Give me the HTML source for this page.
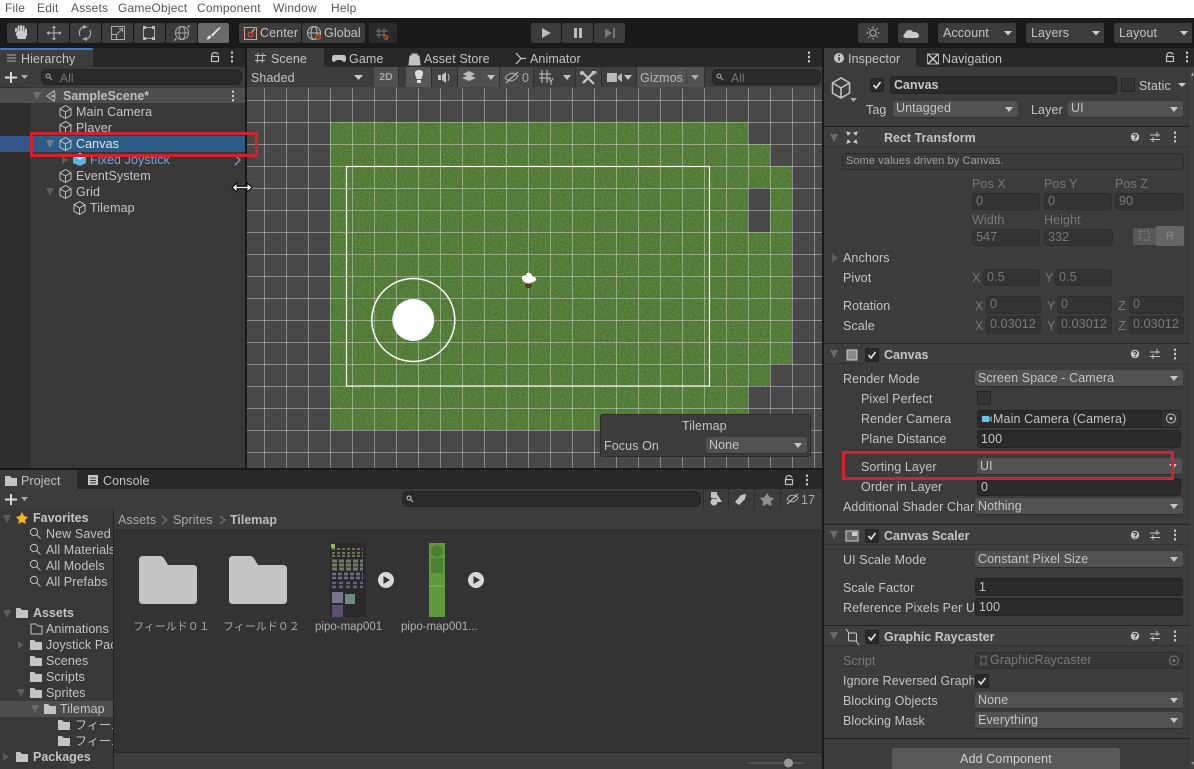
<!DOCTYPE html>
<html><head><meta charset="utf-8">
<style>
html,body{margin:0;padding:0;background:#191919;width:1194px;height:769px;overflow:hidden}
body{position:relative;font-family:"Liberation Sans","Noto Sans CJK JP",sans-serif;font-size:12.5px;letter-spacing:.1px;color:#c4c4c4}
div{position:absolute;box-sizing:border-box}
.t{height:16px;line-height:16px;white-space:nowrap}
.b{font-weight:bold;letter-spacing:0}
.g{color:#787878}
.m{color:#555;top:0;height:18px;line-height:16px;white-space:nowrap;font-size:12px;letter-spacing:.2px}
.d{background:#515151;border-radius:3px;border-bottom:1px solid #2e2e2e;line-height:17px;padding-left:3px;white-space:nowrap}
.d:after{content:"";position:absolute;right:5px;top:6px;border:4.5px solid transparent;border-top:5px solid #c4c4c4;border-bottom:0}
.f{background:#2a2a2a;border:1px solid #232323;border-radius:3px;line-height:17px;padding-left:3px;white-space:nowrap}
.fg{background:#333;border:1px solid #2d2d2d;border-radius:3px;line-height:15px;padding-left:3px;color:#787878;white-space:nowrap}
.c{background:#2a2a2a;border:1px solid #232323;border-radius:2px}
.tb{background:#3c3c3c;border-radius:2px;top:23px;height:20px}
.sb{background:#484848;top:67px;height:20px;border-right:1px solid #2e2e2e}
.l{background:#232323;height:1px}
.h{background:#3f3f3f;height:20px;left:824px;width:366px}
</style></head><body>

<div style="left:0;top:0;width:1194px;height:18px;background:#fff"></div>
<div class="m" style="left:5px">File</div>
<div class="m" style="left:37px">Edit</div>
<div class="m" style="left:71px">Assets</div>
<div class="m" style="left:118px">GameObject</div>
<div class="m" style="left:197px">Component</div>
<div class="m" style="left:273px">Window</div>
<div class="m" style="left:331px">Help</div>

<!-- toolbar -->
<div class="tb" style="left:7px;width:30px"></div>
<div class="tb" style="left:38px;width:31px"></div>
<div class="tb" style="left:70px;width:31px"></div>
<div class="tb" style="left:102px;width:31px"></div>
<div class="tb" style="left:134px;width:31px"></div>
<div class="tb" style="left:166px;width:31px"></div>
<div class="tb" style="left:198px;width:31px;background:#6a6a6a"></div>
<div class="tb" style="left:239px;width:62px"></div>
<div class="tb" style="left:302px;width:63px"></div>
<div class="tb" style="left:369px;width:28px;background:#2a2a2a"></div>
<div class="t" style="left:260px;top:25px">Center</div>
<div class="t" style="left:324px;top:25px">Global</div>
<div class="tb" style="left:531px;width:30px"></div>
<div class="tb" style="left:562px;width:31px"></div>
<div class="tb" style="left:594px;width:31px"></div>
<div class="tb" style="left:858px;width:30px"></div>
<div class="tb" style="left:898px;width:30px"></div>
<div class="tb" style="left:938px;width:78px"></div>
<div class="tb" style="left:1026px;width:78px"></div>
<div class="tb" style="left:1114px;width:78px"></div>
<div class="t" style="left:943px;top:25px">Account</div>
<div class="t" style="left:1031px;top:25px">Layers</div>
<div class="t" style="left:1119px;top:25px">Layout</div>

<!-- tab bars -->
<div style="left:0;top:48px;width:245px;height:19px;background:#282828"></div>
<div style="left:0;top:48px;width:93px;height:19px;background:#3c3c3c;border-top:2px solid #3a79bb"></div>
<div style="left:247px;top:48px;width:575px;height:19px;background:#282828"></div>
<div style="left:247px;top:48px;width:77px;height:19px;background:#3c3c3c"></div>
<div style="left:824px;top:48px;width:370px;height:19px;background:#282828"></div>
<div style="left:824px;top:48px;width:92px;height:19px;background:#3c3c3c"></div>
<div class="t" style="left:21px;top:51px">Hierarchy</div>
<div class="t" style="left:271px;top:51px">Scene</div>
<div class="t" style="left:349px;top:51px">Game</div>
<div class="t" style="left:424px;top:51px">Asset Store</div>
<div class="t" style="left:530px;top:51px">Animator</div>
<div class="t" style="left:848px;top:51px">Inspector</div>
<div class="t" style="left:942px;top:51px">Navigation</div>

<!-- Hierarchy -->
<div style="left:0;top:67px;width:245px;height:20px;background:#3c3c3c"></div>
<div style="left:41px;top:69px;width:201px;height:16px;background:#2a2a2a;border-radius:6px;border:1px solid #232323"></div>
<div class="t g" style="left:60px;top:70px;font-size:12px">All</div>
<div style="left:0;top:87px;width:245px;height:381px;background:#383838"></div>
<div style="left:0;top:87px;width:30px;height:381px;background:#2e2e2e"></div>
<div style="left:0;top:88px;width:245px;height:15px;background:#4e4e4e"></div>
<div class="t b" style="left:63px;top:88px;color:#bdbdbd">SampleScene*</div>
<div class="t" style="left:76px;top:104px">Main Camera</div>
<div class="t" style="left:76px;top:120px">Player</div>
<div style="left:0;top:136px;width:245px;height:16px;background:#2c5d87"></div>
<div style="left:0;top:136px;width:30px;height:16px;background:#34558a"></div>
<div class="t" style="left:76px;top:136px;color:#e4e4e4">Canvas</div>
<div class="t" style="left:90px;top:152px;color:#7c9fd8">Fixed Joystick</div>
<div class="t" style="left:76px;top:168px">EventSystem</div>
<div class="t" style="left:76px;top:184px">Grid</div>
<div class="t" style="left:90px;top:200px">Tilemap</div>

<!-- Scene toolbar -->
<div style="left:247px;top:67px;width:575px;height:20px;background:#3c3c3c"></div>
<div class="t" style="left:251px;top:70px">Shaded</div>
<div class="sb" style="left:374px;width:25px;background:#505050;color:#a8a8a8;font-size:10.5px;font-weight:bold;line-height:20px;text-align:center">2D</div>
<div class="sb" style="left:406px;width:26px;background:#585858"></div>
<div class="sb" style="left:432px;width:26px;background:#444"></div>
<div class="sb" style="left:458px;width:42px;background:#505050"></div>
<div class="sb" style="left:500px;width:34px;background:#484848"></div>
<div class="sb" style="left:534px;width:42px;background:#3f3f3f"></div>
<div class="sb" style="left:576px;width:26px;background:#444"></div>
<div class="sb" style="left:602px;width:35px;background:#3f3f3f"></div>
<div class="sb" style="left:637px;width:68px;background:#525252"></div>
<div class="t" style="left:522px;top:70px;color:#aaa">0</div>
<div class="t" style="left:640px;top:70px;color:#b8b8b8">Gizmos</div>
<div style="left:712px;top:69px;width:109px;height:16px;background:#2a2a2a;border-radius:6px;border:1px solid #232323"></div>
<div class="t g" style="left:731px;top:70px;font-size:12px">All</div>

<!-- Scene view -->
<svg style="position:absolute;left:247px;top:87px" width="575" height="381" viewBox="247 87 575 381">
<defs>
<filter id="n" x="0" y="0" width="100%" height="100%" color-interpolation-filters="sRGB"><feTurbulence type="fractalNoise" baseFrequency=".45 .8" numOctaves="2" seed="4"/><feColorMatrix values="0 0 0 0 .26  0 0 0 0 .4  0 0 0 0 .17  1.600 0 0 0 -.5"/></filter>
<pattern id="gv" x="264" y="0" width="22" height="22" patternUnits="userSpaceOnUse"><rect x="0" width="1" height="22" fill="#fff" fill-opacity=".36"/></pattern>
<pattern id="gh" x="0" y="100" width="22" height="22" patternUnits="userSpaceOnUse"><rect y="0" width="22" height="1" fill="#fff" fill-opacity=".36"/></pattern>
<clipPath id="gc"><path d="M330 122H748V144H770V166H792V364H770V386H748V430H330Z"/></clipPath>
</defs>
<rect x="247" y="87" width="575" height="381" fill="#484848"/>
<g clip-path="url(#gc)"><rect x="330" y="122" width="462" height="308" fill="#5c873f"/><rect x="330" y="122" width="462" height="308" filter="url(#n)"/></g>
<rect x="748" y="188" width="22" height="44" fill="#484848"/>
<rect x="247" y="88" width="575" height="380" fill="url(#gv)"/>
<rect x="247" y="88" width="575" height="380" fill="url(#gh)"/>
<rect x="346.500" y="166.500" width="363" height="219.500" fill="none" stroke="#f4fbe8" stroke-width="1.200"/>
<circle cx="413.300" cy="320" r="41.500" fill="none" stroke="#fff" stroke-width="1.500"/>
<circle cx="413.300" cy="320" r="21" fill="#fff"/>
<path d="M522 277c1-2 3-2 4-1 0-3 2-4 4-3 2 1 2 3 3 4 2 0 4 1 3 3-1 2-4 2-5 3h-5c-2-1-4-2-4-6z" fill="#fff"/>
<path d="M525 284h7l-1 4h-5z" fill="#5a3c22"/>
</svg>

<!-- Tilemap overlay -->
<div style="left:600px;top:414px;width:211px;height:43px;background:#3c3c3c;border:1px solid #2c2c2c;border-radius:3px"></div>
<div class="t" style="left:682px;top:418px">Tilemap</div>
<div class="t" style="left:604px;top:438px">Focus On</div>
<div class="d" style="left:706px;top:437px;width:101px;height:17px">None</div>

<!-- Project panel -->
<div style="left:0;top:470px;width:822px;height:19px;background:#282828"></div>
<div style="left:0;top:470px;width:77px;height:19px;background:#3c3c3c"></div>
<div class="t" style="left:21px;top:473px">Project</div>
<div class="t" style="left:103px;top:473px">Console</div>
<div style="left:0;top:489px;width:822px;height:20px;background:#3c3c3c"></div>
<div style="left:402px;top:491px;width:299px;height:16px;background:#2a2a2a;border-radius:6px;border:1px solid #232323"></div>
<div style="left:703px;top:489px;width:1px;height:20px;background:#2c2c2c"></div>
<div style="left:728px;top:489px;width:1px;height:20px;background:#2c2c2c"></div>
<div style="left:754px;top:489px;width:1px;height:20px;background:#2c2c2c"></div>
<div style="left:780px;top:489px;width:1px;height:20px;background:#2c2c2c"></div>
<div class="t" style="left:801px;top:492px;color:#aaa">17</div>

<div style="left:0;top:509px;width:113px;height:260px;background:#383838;overflow:hidden">
<div class="t b" style="left:33px;top:1px">Favorites</div>
<div class="t" style="left:46px;top:17px">New Saved</div>
<div class="t" style="left:46px;top:33px">All Materials</div>
<div class="t" style="left:46px;top:49px">All Models</div>
<div class="t" style="left:46px;top:65px">All Prefabs</div>
<div class="t b" style="left:33px;top:96px">Assets</div>
<div class="t" style="left:46px;top:112px">Animations</div>
<div class="t" style="left:46px;top:128px">Joystick Pack</div>
<div class="t" style="left:46px;top:144px">Scenes</div>
<div class="t" style="left:46px;top:160px">Scripts</div>
<div class="t" style="left:46px;top:176px">Sprites</div>
<div style="left:0;top:192px;width:113px;height:16px;background:#4d4d4d"></div>
<div class="t" style="left:60px;top:192px">Tilemap</div>
<div class="t" style="left:75px;top:208px;font-size:12px">フィールド</div>
<div class="t" style="left:75px;top:224px;font-size:12px">フィールド</div>
<div class="t b" style="left:33px;top:240px">Packages</div>
</div>
<div style="left:113px;top:509px;width:1px;height:260px;background:#232323"></div>
<div style="left:114px;top:509px;width:708px;height:22px;background:#3c3c3c;border-bottom:1px solid #2a2a2a"></div>
<div class="t" style="left:118px;top:512px;color:#aaa">Assets</div>
<div class="t" style="left:173px;top:512px;color:#aaa">Sprites</div>
<div class="t b" style="left:230px;top:512px;color:#bbb">Tilemap</div>
<div style="left:114px;top:531px;width:708px;height:222px;background:#333"></div>
<div style="left:114px;top:752px;width:708px;height:17px;background:#3c3c3c;border-top:1px solid #2a2a2a"></div>
<div class="t" style="left:133px;top:619px;font-size:11px;color:#a8a8a8;letter-spacing:0">フィールド０１</div>
<div class="t" style="left:223px;top:619px;font-size:11px;color:#a8a8a8;letter-spacing:0">フィールド０２</div>
<div class="t" style="left:315px;top:619px;font-size:11.500px;color:#b0b0b0;letter-spacing:0">pipo-map001</div>
<div class="t" style="left:401px;top:619px;font-size:11.500px;color:#b0b0b0;letter-spacing:0">pipo-map001...</div>

<!-- Inspector -->
<div style="left:824px;top:67px;width:370px;height:702px;background:#3c3c3c"></div>
<div style="left:1190px;top:67px;width:4px;height:702px;background:#414141"></div>
<div class="c" style="left:870px;top:78px;width:14px;height:14px"></div>
<div class="f b" style="left:890px;top:76px;width:227px;height:18px;color:#c8c8c8;line-height:16px">Canvas</div>
<div class="c" style="left:1121px;top:78px;width:14px;height:14px;background:#333"></div>
<div class="t" style="left:1139px;top:78px">Static</div>
<div class="t" style="left:866px;top:102px">Tag</div>
<div class="d" style="left:893px;top:101px;width:125px;height:17px;line-height:15px">Untagged</div>
<div class="t" style="left:1031px;top:102px">Layer</div>
<div class="d" style="left:1068px;top:101px;width:115px;height:17px;line-height:15px">UI</div>

<div class="l" style="left:824px;top:126px;width:366px"></div>
<div class="h" style="top:127px;border-bottom:1px solid #333"></div>
<div class="t b" style="left:884px;top:130px">Rect Transform</div>
<div class="fg" style="left:842px;top:153px;width:342px;height:17px;font-size:11px;color:#a0a0a0;background:#3a3a3a;line-height:15px">Some values driven by Canvas.</div>
<div class="t g" style="left:972px;top:176px">Pos X</div>
<div class="t g" style="left:1044px;top:176px">Pos Y</div>
<div class="t g" style="left:1115px;top:176px">Pos Z</div>
<div class="fg" style="left:972px;top:193px;width:68px;height:17px">0</div>
<div class="fg" style="left:1044px;top:193px;width:68px;height:17px">0</div>
<div class="fg" style="left:1115px;top:193px;width:69px;height:17px">90</div>
<div class="t g" style="left:972px;top:212px">Width</div>
<div class="t g" style="left:1044px;top:212px">Height</div>
<div class="fg" style="left:972px;top:229px;width:68px;height:17px">547</div>
<div class="fg" style="left:1044px;top:229px;width:69px;height:17px">332</div>
<div style="left:1133px;top:228px;width:24px;height:17px;background:#585858"></div>
<div style="left:1156px;top:226px;width:28px;height:20px;background:#666;border-radius:2px;color:#8a8a8a;font-size:11px;line-height:20px;text-align:center">R</div>
<div class="t" style="left:843px;top:250px">Anchors</div>
<div class="t" style="left:843px;top:270px">Pivot</div>
<div class="t g" style="left:972px;top:270px">X</div>
<div class="fg" style="left:983px;top:269px;width:57px;height:17px">0.5</div>
<div class="t g" style="left:1045px;top:270px">Y</div>
<div class="fg" style="left:1055px;top:269px;width:57px;height:17px">0.5</div>
<div class="t" style="left:843px;top:298px">Rotation</div>
<div class="t g" style="left:975px;top:298px">X</div>
<div class="fg" style="left:986px;top:296px;width:55px;height:18px">0</div>
<div class="t g" style="left:1047px;top:298px">Y</div>
<div class="fg" style="left:1057px;top:296px;width:55px;height:18px">0</div>
<div class="t g" style="left:1118px;top:298px">Z</div>
<div class="fg" style="left:1129px;top:296px;width:55px;height:18px">0</div>
<div class="t" style="left:843px;top:318px">Scale</div>
<div class="t g" style="left:975px;top:318px">X</div>
<div class="fg" style="left:986px;top:316px;width:55px;height:18px">0.03012</div>
<div class="t g" style="left:1047px;top:318px">Y</div>
<div class="fg" style="left:1057px;top:316px;width:55px;height:18px">0.03012</div>
<div class="t g" style="left:1118px;top:318px">Z</div>
<div class="fg" style="left:1129px;top:316px;width:55px;height:18px">0.03012</div>

<div class="l" style="left:824px;top:343px;width:366px"></div>
<div class="h" style="top:344px;border-bottom:1px solid #333"></div>
<div class="c" style="left:865px;top:348px;width:14px;height:14px"></div>
<div class="t b" style="left:884px;top:347px">Canvas</div>
<div class="t" style="left:843px;top:371px">Render Mode</div>
<div class="d" style="left:975px;top:370px;width:208px;height:17px">Screen Space - Camera</div>
<div class="t" style="left:861px;top:391px">Pixel Perfect</div>
<div class="c" style="left:977px;top:391px;width:14px;height:14px;background:#333"></div>
<div class="t" style="left:861px;top:411px">Render Camera</div>
<div class="f" style="left:977px;top:410px;width:204px;height:18px;padding-left:15px">Main Camera (Camera)</div>
<div style="left:1162px;top:411px;width:18px;height:16px;background:#333"></div>
<div class="t" style="left:861px;top:431px">Plane Distance</div>
<div class="f" style="left:977px;top:430px;width:204px;height:18px">100</div>
<div class="t" style="left:861px;top:459px">Sorting Layer</div>
<div class="d" style="left:977px;top:458px;width:205px;height:17px">UI</div>
<div class="t" style="left:861px;top:479px">Order in Layer</div>
<div class="f" style="left:977px;top:478px;width:204px;height:18px">0</div>
<div class="t" style="left:843px;top:499px;width:131px;overflow:hidden">Additional Shader Char</div>
<div class="d" style="left:975px;top:498px;width:208px;height:17px;line-height:16px">Nothing</div>

<div class="l" style="left:824px;top:524px;width:366px"></div>
<div class="h" style="top:525px;border-bottom:1px solid #333"></div>
<div class="c" style="left:865px;top:529px;width:14px;height:14px"></div>
<div class="t b" style="left:884px;top:528px">Canvas Scaler</div>
<div class="t" style="left:843px;top:552px">UI Scale Mode</div>
<div class="d" style="left:975px;top:551px;width:208px;height:17px;line-height:16px">Constant Pixel Size</div>
<div class="t" style="left:843px;top:580px">Scale Factor</div>
<div class="f" style="left:975px;top:578px;width:208px;height:18px">1</div>
<div class="t" style="left:843px;top:600px;width:131px;overflow:hidden">Reference Pixels Per U</div>
<div class="f" style="left:975px;top:598px;width:208px;height:18px">100</div>

<div class="l" style="left:824px;top:625px;width:366px"></div>
<div class="h" style="top:626px;border-bottom:1px solid #333"></div>
<div class="c" style="left:865px;top:630px;width:14px;height:14px"></div>
<div class="t b" style="left:884px;top:629px">Graphic Raycaster</div>
<div class="t g" style="left:843px;top:653px">Script</div>
<div class="fg" style="left:975px;top:652px;width:208px;height:17px;padding-left:14px;background:#363636">GraphicRaycaster</div>
<div class="t" style="left:843px;top:673px;width:131px;overflow:hidden">Ignore Reversed Graph</div>
<div class="c" style="left:975px;top:674px;width:14px;height:14px"></div>
<div class="t" style="left:843px;top:693px">Blocking Objects</div>
<div class="d" style="left:975px;top:692px;width:208px;height:17px;line-height:16px">None</div>
<div class="t" style="left:843px;top:713px">Blocking Mask</div>
<div class="d" style="left:975px;top:712px;width:208px;height:17px;line-height:16px">Everything</div>
<div class="l" style="left:824px;top:738px;width:366px"></div>
<div style="left:892px;top:748px;width:228px;height:21px;background:#585858;border-radius:3px 3px 0 0;text-align:center;line-height:22px;color:#d0d0d0">Add Component</div>

<!-- icons overlay -->
<svg style="position:absolute;left:0;top:0" width="1194" height="769" viewBox="0 0 1194 769" fill="none">
<defs>
<g id="cube" stroke="#c4c4c4" stroke-width="1" stroke-linejoin="round"><path d="M0-6.500 5.500-3.300V3.300L0 6.500-5.500 3.300V-3.300Z"/><path d="M-5.500-3.300 0 0 5.500-3.300M0 0V6.500"/></g>
<g id="dots" fill="#c4c4c4"><rect x="-1" y="-5.500" width="2" height="2.400"/><rect x="-1" y="-1.200" width="2" height="2.400"/><rect x="-1" y="3.100" width="2" height="2.400"/></g>
<g id="lock" stroke="#c4c4c4" stroke-width="1.200"><rect x="-3.500" y="-.5" width="7" height="5"/><path d="M-3-1V-2.500C-3-5 2.500-5 3-2.500"/></g>
<path id="fo" d="M0-5H4L6-3H12V5H0Z" fill="#c4c4c4"/>
<g id="mag" stroke="#c4c4c4" stroke-width="1"><circle cx="-1" cy="-1" r="3.600"/><path d="M1.600 1.600 5.500 5.500"/></g>
<g id="hh"><circle r="4.200" fill="#c4c4c4"/><path d="M-1.500-1.500C-1.200-3 1.500-2.800 1.500-1.200 1.500.2 0 0 0 1.300M0 2.200V3.200" stroke="#3c3c3c" stroke-width="1.300"/></g>
<g id="sl" stroke="#c4c4c4" stroke-width="1"><path d="M-5-2H5M-5 2.500H5M2-5V0M-2 0V5"/></g>
<path id="ck" d="M-3.500 0-1 3 3.500-3" stroke="#e8e8e8" stroke-width="1.600" fill="none"/>
<g id="pl"><circle r="8" fill="#d8d8d8"/><path d="M-2.500-4 4 0-2.500 4Z" fill="#333"/></g>
</defs>

<!-- tools -->
<path d="M16 31V29M18.500 33V26.500M21 33V26M23.500 33V26.500M26 35V29.500" stroke="#ccc" stroke-width="2" stroke-linecap="round"/><path d="M15.500 33.500 18 39H25.500L27 33 24 31H18Z" fill="#ccc"/>
<path d="M54 27V39M48 33H60" stroke="#aaa" stroke-width="1.200"/><path d="M54 25.500 56 28H52ZM54 40.500 56 38H52ZM46.500 33 49 31V35ZM61.500 33 59 31V35Z" fill="#bbb"/>
<path d="M80 36C78 31 81 27 85 26.500M90 30C92 35 89 39 85 39.500" stroke="#aaa" stroke-width="1.200"/><path d="M83 25 88 27 83 29ZM87 41 82 39 87 37Z" fill="#aaa"/>
<rect x="111.500" y="26.500" width="13" height="13" stroke="#aaa"/><path d="M111.500 34.500H116.500V39.500M116 35 122 29M119 28.500H122.500V32" stroke="#aaa"/>
<path d="M145 27.500H153M145 38.500H153M143.500 29V37M154.500 29V37" stroke="#aaa"/><path d="M143 26h3v3h-3zM152 26h3v3h-3zM143 37h3v3h-3zM152 37h3v3h-3z" fill="#bbb"/>
<circle cx="182" cy="33" r="6.500" stroke="#aaa"/><ellipse cx="182" cy="33" rx="3" ry="6.500" stroke="#aaa"/><path d="M175.500 33H188.500" stroke="#aaa"/><path d="M174 41 177 40 175 38ZM190 25 187 26 189 28Z" fill="#aaa"/>
<path d="M207 38.500C208 35.500 210 35 211 36 211 38.500 209 39.500 207 39.500Z" fill="#e8e8e8"/><path d="M211 35 219.500 27 220.500 28 212.500 36.500Z" fill="#e8e8e8"/>
<rect x="244.500" y="27.500" width="12" height="12" stroke="#d8a090"/><circle cx="250.500" cy="34.500" r="2.300" stroke="#e05a3c"/><path d="M252 32 255 28.500" stroke="#ccc"/>
<circle cx="314" cy="33" r="6.500" stroke="#bbb"/><ellipse cx="314" cy="33" rx="3" ry="6.500" stroke="#bbb"/><path d="M307.500 33H320.500" stroke="#bbb"/><circle cx="318" cy="37" r="2.500" fill="#7c4030" stroke="#d05030"/>
<path d="M379 28V38M384 28V38M376 31H388M376 35H384" stroke="#777"/><path d="M384 35 Q389 36 387 39 L384 39" stroke="#d05a30" stroke-width="1.300"/>
<path d="M542 28V38L551 33Z" fill="#bbb"/>
<path d="M574 28h3v10h-3zM579 28h3v10h-3z" fill="#bbb"/>
<path d="M605 28V38L612 33ZM613 28h2v10h-2z" fill="#777"/>
<!-- right top -->
<circle cx="873" cy="33" r="3.200" stroke="#bbb"/><path d="M873 26.500V28M873 38V39.500M866.500 33H868M878 33H879.500M868.500 28.500 869.500 29.500M876.500 36.500 877.500 37.500M868.500 37.500 869.500 36.500M876.500 29.500 877.500 28.500" stroke="#bbb" stroke-width="1.200"/>
<path d="M906 38C903 38 902.500 34.500 905 33.800 905.500 30 911 28.500 913 32 916 31.500 919 33.500 919 35.500 919 37.500 917 38 916 38Z" fill="#c8c8c8"/>
<path d="M1004 31H1012L1008 35.500Z" fill="#ccc"/>
<path d="M1092 31H1100L1096 35.500Z" fill="#ccc"/>
<path d="M1180 31H1188L1184 35.500Z" fill="#ccc"/>

<!-- tabs -->
<path d="M7 55H16M7 58H16M7 61H16" stroke="#aaa" stroke-width=".9"/>
<use href="#lock" x="215" y="57"/><use href="#dots" x="232" y="57"/>
<path d="M258 53 257 63M263 53 262 63M255 55.500H266M255 60.500H265" stroke="#bbb"/>
<path d="M334 55H344Q346 55 346 59 346 62 344 62L341 60H337L334 62Q332 62 332 59 332 55 334 55Z" fill="#c4c4c4"/>
<path d="M410 56H419L420 65H409ZM412 56V54H417V56" fill="#c4c4c4" stroke="#c4c4c4"/>
<path d="M516 53 521 58.500 516 64M521 58.500H526" stroke="#c4c4c4" stroke-width="1.300"/>
<use href="#dots" x="809" y="57"/>
<circle cx="839" cy="58" r="5" fill="#c4c4c4"/><path d="M839 57V61M839 54.500V56" stroke="#333" stroke-width="1.400"/>
<rect x="927.500" y="54" width="11" height="10" stroke="#aaa"/><path d="M928 54 938 64M938 54 928 64" stroke="#ccc" stroke-width="1.400"/>
<use href="#lock" x="1170" y="57"/><use href="#dots" x="1187" y="57"/>

<!-- hierarchy -->
<path d="M11 72V83M5 77.500H17" stroke="#d8d8d8" stroke-width="2"/><path d="M21 75H28L24.500 79Z" fill="#aaa"/>
<circle cx="48" cy="76" r="2" stroke="#aaa"/><path d="M49.500 77.500 52 80" stroke="#aaa"/>
<path d="M33 92H41L37 100Z" fill="#6e6e6e"/>
<path d="M47 96 54 91 55 95 51.500 96 55 97 54 101Z" stroke="#c4c4c4"/>
<use href="#dots" x="233" y="96"/>
<use href="#cube" x="65.500" y="112"/><use href="#cube" x="65.500" y="128"/>
<path d="M46 140H54L50 148Z" fill="#6e7e90"/><use href="#cube" x="65.500" y="144"/>
<path d="M62 156V164L68 160Z" fill="#5c5c5c"/>
<path d="M80 153 86 156V163L80 166 73 163V156Z" fill="#5ab4e0"/><path d="M73 156 80 160 86 156 80 153Z" fill="#bfe6fa"/>
<path d="M235 155 240 160 235 165" stroke="#8090a8" stroke-width="1.500"/>
<use href="#cube" x="65.500" y="176"/>
<path d="M46 188H54L50 196Z" fill="#5c5c5c"/><use href="#cube" x="65.500" y="192"/>
<use href="#cube" x="79.500" y="208"/>
<path d="M233 187.500H251" stroke="#000" stroke-width="3.500"/><path d="M232 187.500 237 183V192ZM252 187.500 247 183V192Z" fill="#fff" stroke="#000"/><path d="M235 187.500H249" stroke="#fff" stroke-width="1.400"/>

<!-- scene toolbar -->
<path d="M354 75H363L358.500 80Z" fill="#ccc"/>
<path d="M415 73C415 69 423 69 423 73 423 76 421.500 76.500 421.500 79H416.500C416.500 76.500 415 76 415 73ZM417 80H421V83H417Z" fill="#ddd"/>
<path d="M438 75H441V80H438ZM442 75 446 72V83L442 80Z" fill="#c4c4c4"/><path d="M448 74Q450 77 448 81" stroke="#c4c4c4"/>
<path d="M462 78 469 81 476 78 469 75ZM463 74 469 77 475 74 469 71Z" fill="#bbb"/>
<path d="M487 75H495L491 80Z" fill="#c4c4c4"/>
<path d="M505 78C509 72 514 72 518 76 514 82 509 82 505 78Z" stroke="#b0b0b0"/><path d="M506 83 518 72" stroke="#b0b0b0" stroke-width="1.300"/>
<path d="M542 70V83M547 70V83M539 74H551M539 78H551" stroke="#c4c4c4"/><path d="M549 78 551 82 553 78M551 82V85" stroke="#c4c4c4"/>
<path d="M563 75H571L567 80Z" fill="#c4c4c4"/>
<path d="M583 73 594 84" stroke="#c4c4c4" stroke-width="2"/><path d="M594 72 583 83" stroke="#c4c4c4" stroke-width="2.400"/><path d="M592 71H596L597 74 594 72.500 595 75 591 74Z" fill="#c4c4c4"/><circle cx="582" cy="73" r="2" fill="#c4c4c4"/>
<path d="M607 73H617V82H607ZM618 76 622 73V82L618 79Z" fill="#bbb"/>
<path d="M624 75H632L628 80Z" fill="#c4c4c4"/>
<path d="M691 75H699L695 80Z" fill="#aaa"/><path d="M687 70V85" stroke="#333" stroke-width=".6"/>
<path d="M480 70V85" stroke="#444"/>
<circle cx="719" cy="76" r="2" stroke="#aaa"/><path d="M720.500 77.500 723 80" stroke="#aaa"/>

<!-- project -->
<path d="M5 476H10L12 478H17V486H5Z" fill="#c4c4c4"/>
<path d="M88 475H98V485H88Z" fill="#c4c4c4"/><path d="M90 478H96M90 480.500H96M90 483H96" stroke="#333"/>
<use href="#lock" x="789" y="480"/><use href="#dots" x="807" y="480"/>
<path d="M11 494V505M5 499.500H17" stroke="#d8d8d8" stroke-width="2"/><path d="M21 497H28L24.500 501Z" fill="#aaa"/>
<circle cx="409" cy="498" r="2" stroke="#ccc"/><path d="M410.500 499.500 413 502" stroke="#ccc"/>
<path d="M711 492H717V498H711ZM717 494 722 502H716Z" fill="#c4c4c4"/><circle cx="714" cy="502" r="3.500" fill="#c4c4c4"/>
<path d="M735 502 741 495 746 494 745 499 739 505Z" fill="#c4c4c4"/>
<path d="M767 493 769.500 497 774 498 771 501.500 771.500 506 767 504 762.500 506 763 501.500 760 498 764.500 497Z" fill="#8e8e8e"/>
<path d="M787 499C790 494 795 494 798 498 795 503 790 503 787 499Z" stroke="#b0b0b0"/><path d="M787 504 798 494" stroke="#b0b0b0" stroke-width="1.300"/>

<path d="M3 515H11L7 523Z" fill="#5c5c5c"/>
<path d="M22 512 24 516 28 517 25 520 26 524 22 522 18 524 19 520 16 517 20 516Z" fill="#f2b622"/>
<use href="#mag" x="35" y="533"/><use href="#mag" x="35" y="549"/><use href="#mag" x="35" y="565"/><use href="#mag" x="35" y="581"/>
<path d="M3 610H11L7 618Z" fill="#5c5c5c"/>
<use href="#fo" x="16" y="613"/>
<path d="M31 624H36L38 626H42V634H31Z" stroke="#c4c4c4"/>
<path d="M18 641V649L24 645Z" fill="#5c5c5c"/>
<use href="#fo" x="30" y="645"/><use href="#fo" x="30" y="661"/><use href="#fo" x="30" y="677"/><use href="#fo" x="30" y="693"/>
<path d="M17 689H25L21 697Z" fill="#5c5c5c"/>
<path d="M31 705H39L35 713Z" fill="#6a6a6a"/>
<use href="#fo" x="44" y="709"/><use href="#fo" x="58" y="725"/><use href="#fo" x="58" y="741"/>
<path d="M3 753V761L9 757Z" fill="#5c5c5c"/><use href="#fo" x="16" y="757"/>
<path d="M162 516 167 520 162 524M220 516 225 520 220 524" stroke="#777" stroke-width="1.200"/>

<path d="M139 560Q139 556 143 556H160Q163 556 165 560L168 565H193Q197 565 197 569V600Q197 604 193 604H143Q139 604 139 600Z" fill="#c4c4c4"/>
<path d="M229 560Q229 556 233 556H250Q253 556 255 560L258 565H283Q287 565 287 569V600Q287 604 283 604H233Q229 604 229 600Z" fill="#c4c4c4"/>
<rect x="330" y="543" width="36" height="74" fill="#2a2a2a"/>
<rect x="331" y="544" width="4" height="4" fill="#8ebc50"/>
<path d="M332 549h31M332 553h31M332 556h31" stroke="#8a8a60" stroke-width="1.500" stroke-dasharray="3 2"/>
<path d="M332 561h31M332 565h31M332 569h31" stroke="#6f7a68" stroke-width="3" stroke-dasharray="5 2"/>
<path d="M332 574h31M332 578h31" stroke="#6a7088" stroke-width="2.500" stroke-dasharray="4 2"/>
<path d="M332 583h31M332 587h31" stroke="#665e78" stroke-width="2.500" stroke-dasharray="4 3"/>
<rect x="332" y="592" width="11" height="11" fill="#77758e"/><rect x="345" y="594" width="10" height="10" fill="#6e8a7c"/><rect x="332" y="605" width="11" height="12" fill="#5e4e72"/>
<rect x="429" y="543" width="16" height="74" fill="#5e9a3c"/>
<circle cx="437" cy="551" r="6" fill="#4e8034"/><rect x="431" y="558" width="12" height="15" fill="#4e8034"/><path d="M429 586H445" stroke="#86b860"/>
<use href="#pl" x="386" y="580"/><use href="#pl" x="476" y="580"/>
<path d="M748 763H804" stroke="#5a5a5a" stroke-width="1.500"/><circle cx="788.500" cy="763" r="4.500" fill="#999"/>

<!-- inspector icons -->
<g transform="translate(841 88) scale(1.550)" stroke-width=".8"><use href="#cube"/></g>
<path d="M850 98H857L853.500 102Z" fill="#aaa"/>
<use href="#ck" x="877" y="85"/>
<path d="M1178 83H1186L1182 87Z" fill="#ccc"/>
<path d="M830 134H838L834 142Z" fill="#6a6a6a"/>
<path d="M847 132l3 1-2 2zM857 132l-3 1 2 2zM847 143l3-1-2-2zM857 143l-3-1 2-2z" fill="#ccc" stroke="#ccc"/>
<use href="#hh" x="1135" y="137"/><use href="#sl" x="1155" y="137"/><use href="#dots" x="1175" y="137"/>
<rect x="1140" y="231" width="9" height="9" stroke="#8a8a8a" stroke-dasharray="2 1.500"/>
<path d="M832 253V263L838 258Z" fill="#5c5c5c"/>
<path d="M830 350H838L834 358Z" fill="#6a6a6a"/>
<rect x="847" y="350" width="10" height="10" fill="#888" stroke="#ccc"/><use href="#ck" x="872" y="355"/>
<use href="#hh" x="1135" y="354"/><use href="#sl" x="1155" y="354"/><use href="#dots" x="1175" y="354"/>
<path d="M982 416H989V422H982Z" fill="#6cc0e0"/><path d="M989 417 992 416V422L989 421Z" fill="#4a8cb0"/>
<circle cx="1171" cy="418.500" r="4.500" stroke="#c4c4c4"/><circle cx="1171" cy="418.500" r="1.500" fill="#c4c4c4"/>
<path d="M830 531H838L834 539Z" fill="#6a6a6a"/>
<rect x="846" y="531" width="12" height="10" fill="#666" stroke="#ccc"/><rect x="852" y="532" width="5" height="4" fill="#ccc"/><use href="#ck" x="872" y="536"/>
<use href="#hh" x="1135" y="535"/><use href="#sl" x="1155" y="535"/><use href="#dots" x="1175" y="535"/>
<path d="M830 632H838L834 640Z" fill="#6a6a6a"/>
<path d="M849 633H856M849 641H856M848.500 633V641M856.500 633V641M846 629 849 633M856 641 859 645" stroke="#ccc"/><use href="#ck" x="872" y="637"/>
<use href="#hh" x="1135" y="636"/><use href="#sl" x="1155" y="636"/><use href="#dots" x="1175" y="636"/>
<path d="M980 657H987M980 664H987M981 655V666M986 655V666" stroke="#666"/>
<circle cx="1174" cy="660.500" r="4.500" stroke="#777"/><circle cx="1174" cy="660.500" r="1.500" fill="#777"/>
<use href="#ck" x="982" y="681"/>
<path d="M1191 76 1193 72V76Z" fill="#bbb"/><path d="M1191 762H1194L1192.500 765Z" fill="#999"/>

<!-- red highlights -->
<rect x="31.500" y="133.500" width="225" height="22" stroke="#d3222e" stroke-width="3"/>
<rect x="843.500" y="452.500" width="329" height="26" stroke="#d3222e" stroke-width="3"/>
</svg>
</body></html>
